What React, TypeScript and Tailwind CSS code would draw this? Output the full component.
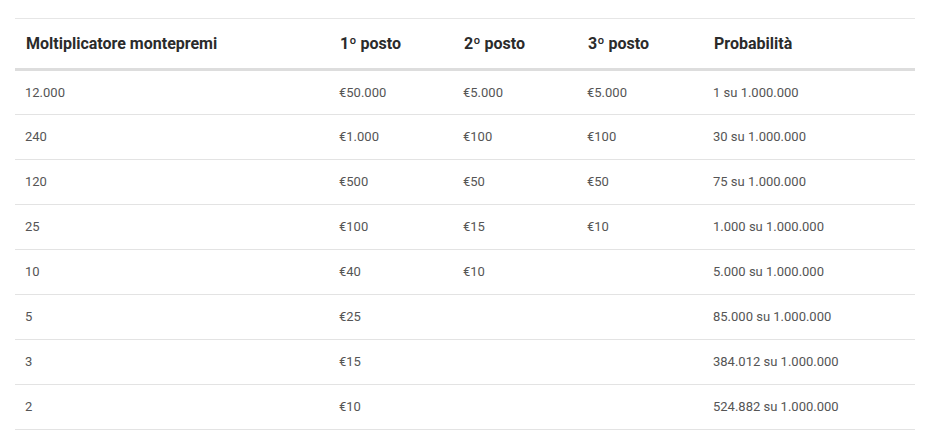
const rows: string[][] = [
  ["12.000", "€50.000", "€5.000", "€5.000", "1 su 1.000.000"],
  ["240", "€1.000", "€100", "€100", "30 su 1.000.000"],
  ["120", "€500", "€50", "€50", "75 su 1.000.000"],
  ["25", "€100", "€15", "€10", "1.000 su 1.000.000"],
  ["10", "€40", "€10", "", "5.000 su 1.000.000"],
  ["5", "€25", "", "", "85.000 su 1.000.000"],
  ["3", "€15", "", "", "384.012 su 1.000.000"],
  ["2", "€10", "", "", "524.882 su 1.000.000"],
];

const heads = ["Moltiplicatore montepremi", "1º posto", "2º posto", "3º posto", "Probabilità"];

export default function App() {
  return (
    <div className="w-[941px] h-[448px] bg-white pt-[18px] pl-[15px] font-['Roboto',sans-serif]">
      <table className="w-[900px] table-fixed border-collapse text-left">
        <colgroup>
          <col className="w-[314px]" />
          <col className="w-[124px]" />
          <col className="w-[124px]" />
          <col className="w-[126px]" />
          <col className="w-[212px]" />
        </colgroup>
        <thead>
          <tr className="border-t border-[#e6e6e6] border-b-[3px] border-b-[#dddddd]">
            {heads.map((h) => (
              <th key={h} className="h-[51px] pl-[11px] pt-[1px] text-[16px] font-bold text-[#2b2b2b]">
                {h}
              </th>
            ))}
          </tr>
        </thead>
        <tbody>
          {rows.map((r, i) => (
            <tr key={i} className="border-b border-[#e3e3e3]">
              {r.map((c, j) => (
                <td key={j} className="h-[45px] pl-[10px] text-[13px] text-[#555555]">
                  {c}
                </td>
              ))}
            </tr>
          ))}
        </tbody>
      </table>
    </div>
  );
}
